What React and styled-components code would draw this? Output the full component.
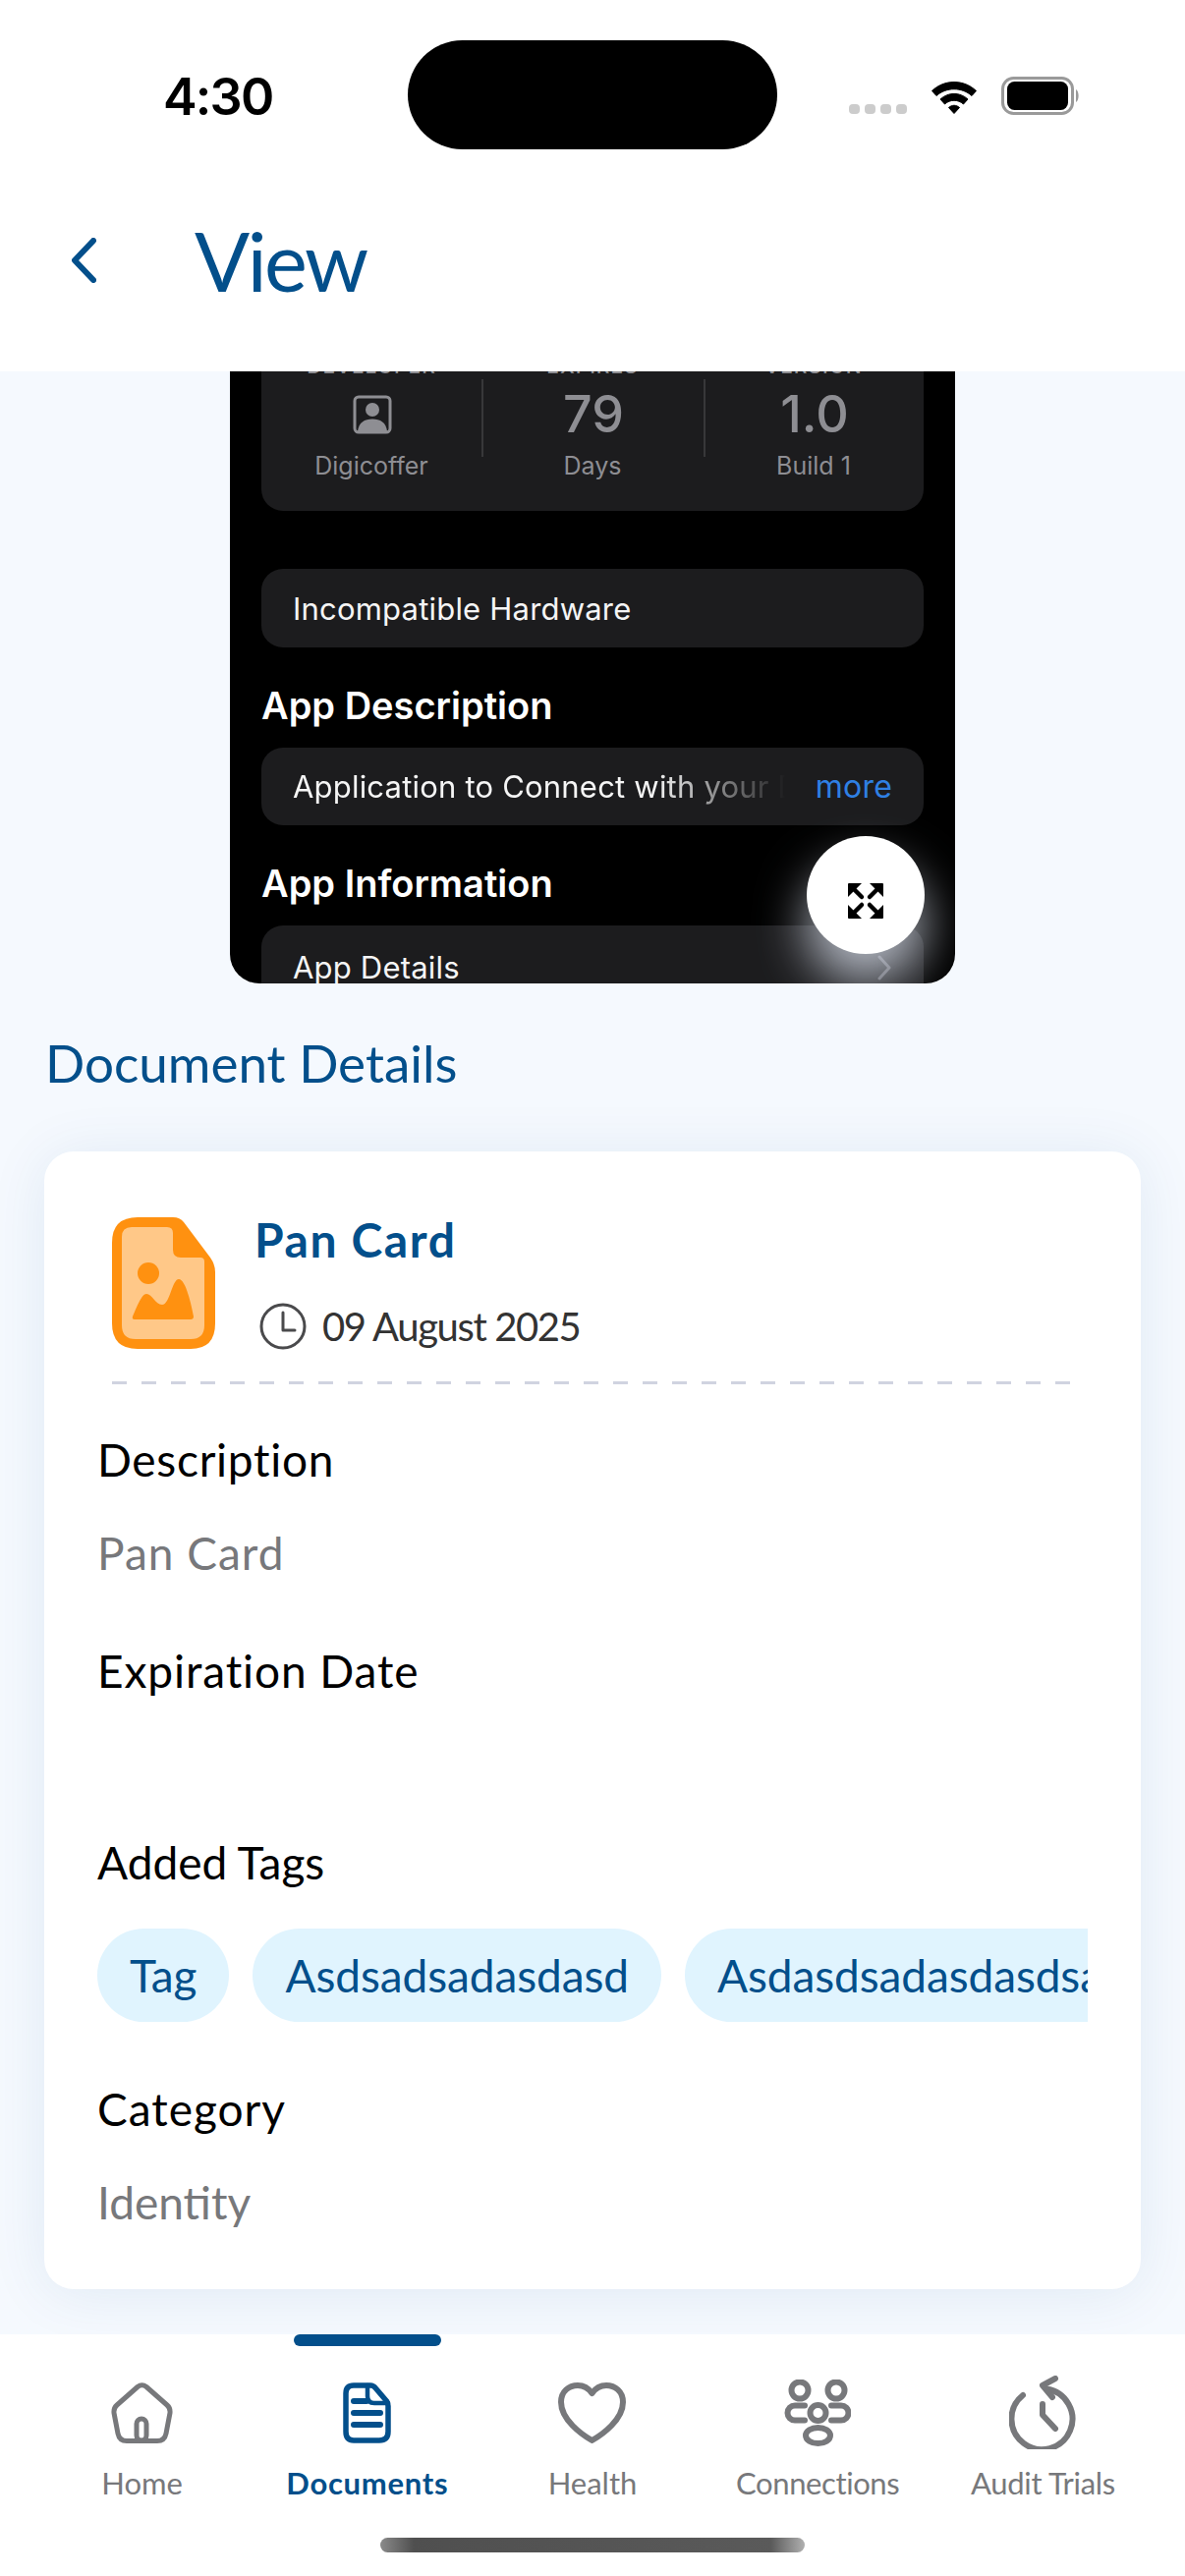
import styled, { createGlobalStyle } from 'styled-components';

const NAVY = '#034f8b';
const GRAY = '#77787b';

const GlobalStyle = createGlobalStyle`
  html, body {
    margin: 0;
    padding: 0;
    background: #ffffff;
  }
  * {
    box-sizing: border-box;
  }
`;

function BackIcon() {
  return (
    <svg width="25" height="46" viewBox="0 0 25 46" fill="none">
      <path d="M22 3 L3 23 L22 43" stroke={NAVY} strokeWidth="6" strokeLinecap="round" strokeLinejoin="round" />
    </svg>
  );
}

function WifiIcon() {
  return (
    <svg width="50" height="37" viewBox="0 0 50 37" fill="none">
      <path d="M2.5 13.5 C15 1.5 35 1.5 47.5 13.5 L43 18.5 C33 9.5 17 9.5 7 18.5 Z" fill="#000" stroke="#000" strokeWidth="1" strokeLinejoin="round" />
      <path d="M11 22 C19 14.5 31 14.5 39 22 L34.5 27 C29 22 21 22 15.5 27 Z" fill="#000" stroke="#000" strokeWidth="1" strokeLinejoin="round" />
      <path d="M19.5 30.5 C23 27.5 27 27.5 30.5 30.5 L25 36.5 Z" fill="#000" stroke="#000" strokeWidth="1" strokeLinejoin="round" />
    </svg>
  );
}

function BatteryIcon() {
  return (
    <svg width="81" height="39" viewBox="0 0 81 39" fill="none">
      <rect x="1.5" y="1.5" width="71" height="36" rx="11" stroke="#9a9a9a" strokeWidth="3" />
      <rect x="6" y="5" width="62" height="29" rx="7.5" fill="#000" />
      <path d="M76 13 C79.5 14.5 79.5 24.5 76 26 Z" fill="#9a9a9a" />
    </svg>
  );
}

function PersonIcon() {
  return (
    <svg width="40" height="40" viewBox="0 0 40 40" fill="none">
      <rect x="2" y="2" width="36" height="36" rx="4" stroke="#8e8e93" strokeWidth="3" />
      <circle cx="20" cy="15" r="7" fill="#8e8e93" />
      <path d="M5 37 C6 28 12 24.500 20 24.500 C28 24.500 34 28 35 37 Z" fill="#8e8e93" />
    </svg>
  );
}

function ExpandIcon() {
  return (
    <svg width="36" height="36" viewBox="0 0 36 36" fill="#000">
      <path d="M0 1 Q0 0 1 0 H14 L0 14 Z" />
      <path d="M36 1 Q36 0 35 0 H22 L36 14 Z" />
      <path d="M0 35 Q0 36 1 36 H14 L0 22 Z" />
      <path d="M36 35 Q36 36 35 36 H22 L36 22 Z" />
      <g stroke="#000" strokeWidth="4.5" strokeLinecap="round">
        <path d="M5 5 L14 14" />
        <path d="M31 5 L22 14" />
        <path d="M5 31 L14 22" />
        <path d="M31 31 L22 22" />
      </g>
    </svg>
  );
}

function ChevronIcon() {
  return (
    <svg width="14" height="26" viewBox="0 0 14 26" fill="none">
      <path d="M2 2 L12 13 L2 24" stroke="#5a5a60" strokeWidth="3" strokeLinecap="round" strokeLinejoin="round" />
    </svg>
  );
}

function FileImageIcon() {
  return (
    <svg width="105" height="134" viewBox="0 0 105 134">
      <path d="M26 0 H62 Q69 0 73 5 L100 41 Q105 48 105 56 V108 Q105 134 80 134 H26 Q0 134 0 108 V26 Q0 0 26 0 Z" fill="#ff9110" />
      <path d="M20 10 H56 Q62 10 62 16 V33 Q62 41 70 41 H90 Q94 41 94 45 V110 Q94 124 80 124 H24 Q10 124 10 110 V20 Q10 10 20 10 Z" fill="#ffc888" />
      <ellipse cx="37" cy="57" rx="11" ry="11" fill="#ff9110" />
      <path d="M21 101 C25 92 30 78 35 78 C41 78 44 89 51 89 C59 89 61 63 68 63 C75 63 81 90 83 101 Q83 104 80 104 H23 Q20 104 21 101 Z" fill="#ff9110" />
    </svg>
  );
}

function ClockIcon() {
  return (
    <svg width="48" height="48" viewBox="0 0 48 48" fill="none" stroke="#4a4a4c" strokeWidth="3" strokeLinecap="round" strokeLinejoin="round">
      <circle cx="24" cy="24" r="22" />
      <path d="M24 10 V28 H36" />
    </svg>
  );
}

function HomeIcon() {
  return (
    <svg width="63" height="62" viewBox="0 0 63 62" fill="none" stroke={GRAY} strokeWidth="5" strokeLinecap="round" strokeLinejoin="round">
      <path d="M27 4.500 Q31.500 1 36 4.500 L57 23 Q60.500 26 60 31 L56 52 Q54.500 59.500 47 59.500 H16 Q8.500 59.500 7 52 L3 31 Q2.500 26 6 23 Z" />
      <rect x="26" y="37" width="10" height="22" rx="5" />
    </svg>
  );
}

function DocumentsIcon() {
  return (
    <svg width="49" height="62" viewBox="0 0 49 62" fill="none" stroke={NAVY} strokeLinecap="round" strokeLinejoin="round">
      <path d="M11 3 H28 Q31 3 33 5.500 L44.500 19 Q46 21 46 24 V50 Q46 59 37 59 H11 Q3 59 3 50 V11 Q3 3 11 3 Z" strokeWidth="5.500" />
      <path d="M25 3 V14 Q25 21 32 21 H46" strokeWidth="4.500" />
      <path d="M11 19 H24 M11 31 H38 M11 43 H38" strokeWidth="6" />
    </svg>
  );
}

function HeartIcon() {
  return (
    <svg width="69" height="62" viewBox="0 0 69 62" fill="none" stroke={GRAY} strokeWidth="6" strokeLinejoin="round">
      <path d="M34.500 59 C24 53 3 38 3 20 C3 9 11 3 20 3 C26 3 31 6 34.500 11 C38 6 43 3 49 3 C58 3 66 9 66 20 C66 38 45 53 34.500 59 Z" />
    </svg>
  );
}

function ConnectionsIcon() {
  return (
    <svg width="68" height="68" viewBox="0 0 68 68" fill="none" stroke={GRAY} strokeWidth="6" strokeLinecap="round">
      <circle cx="16" cy="11" r="8.500" />
      <circle cx="53" cy="11" r="8.500" />
      <circle cx="34.500" cy="34" r="8" />
      <path d="M21 26.500 H11 a7.500 7.500 0 0 0 0 15 H21" />
      <path d="M48 26.500 H58 a7.500 7.500 0 0 1 0 15 H48" />
      <ellipse cx="34.500" cy="57" rx="12.500" ry="8" />
    </svg>
  );
}

function AuditIcon() {
  return (
    <svg width="68" height="75" viewBox="0 0 68 75" fill="none" stroke={GRAY} strokeWidth="6" strokeLinecap="round" strokeLinejoin="round">
      <path d="M14 20 A31 31 0 1 0 38 13.500" />
      <path d="M47 3 L34 10 L44 22" />
      <path d="M34 29 V40 L47 54" />
    </svg>
  );
}

const tabs = [
  { label: 'Home', icon: <HomeIcon /> },
  { label: 'Documents', icon: <DocumentsIcon />, active: true, spacing: 0.7 },
  { label: 'Health', icon: <HeartIcon /> },
  { label: 'Connections', icon: <ConnectionsIcon />, spacing: -0.4 },
  { label: 'Audit Trials', icon: <AuditIcon />, spacing: -0.3 },
];

const stats = [
  { label: 'DEVELOPER', value: <PersonIcon />, caption: 'Digicoffer' },
  { label: 'EXPIRES', value: '79', caption: 'Days' },
  { label: 'VERSION', value: '1.0', caption: 'Build 1' },
];

export default function App() {
  return (
    <Page>
      <GlobalStyle />
      <StatusBar>
        <Clock>4:30</Clock>
        <Island />
        <StatusIcons>
          <SignalDots>
            <i /><i /><i /><i />
          </SignalDots>
          <WifiIcon />
          <BatteryIcon />
        </StatusIcons>
      </StatusBar>
      <Header>
        <BackButton><BackIcon /></BackButton>
        <HeaderTitle>View</HeaderTitle>
      </Header>

      <Content>
        <Preview>
          <StatsCard>
            {stats.map((stat, index) => (
              <Stat key={stat.label}>
                <StatLabel>{stat.label}</StatLabel>
                <StatBody $divider={index > 0}>{stat.value}</StatBody>
                <StatCaption>{stat.caption}</StatCaption>
              </Stat>
            ))}
          </StatsCard>
          <NoticeCard>Incompatible Hardware</NoticeCard>
          <PreviewHeading>App Description</PreviewHeading>
          <DescriptionCard>
            <FadedText>Application to Connect with your D</FadedText>
            <MoreLink>more</MoreLink>
          </DescriptionCard>
          <PreviewHeading>App Information</PreviewHeading>
          <DetailsCard>
            <span>App Details</span>
            <ChevronIcon />
          </DetailsCard>
          <ExpandButton><ExpandIcon /></ExpandButton>
        </Preview>

        <SectionTitle>Document Details</SectionTitle>

        <DetailCard>
          <DocRow>
            <FileImageIcon />
            <DocInfo>
              <DocName>Pan Card</DocName>
              <DocDate>
                <ClockIcon />
                <span>09 August 2025</span>
              </DocDate>
            </DocInfo>
          </DocRow>
          <DashedLine />
          <Fields>
            <FieldLabel $spacing={0.7}>Description</FieldLabel>
            <FieldValue $spacing={1}>Pan Card</FieldValue>
            <FieldLabel $spacing={0.9}>Expiration Date</FieldLabel>
            <FieldValue />
            <FieldLabel>Added Tags</FieldLabel>
            <TagRow>
              <Tag>Tag</Tag>
              <Tag>Asdsadsadasdasd</Tag>
              <Tag>Asdasdsadasdasdsadasd</Tag>
            </TagRow>
            <FieldLabel $spacing={1}>Category</FieldLabel>
            <FieldValue>Identity</FieldValue>
          </Fields>
        </DetailCard>
      </Content>

      <TabBar>
        <Tabs>
          {tabs.map((tab) => (
            <Tab key={tab.label}>
              {tab.active && <ActiveBar />}
              <TabIcon>{tab.icon}</TabIcon>
              <TabLabel $active={tab.active} $spacing={tab.spacing}>{tab.label}</TabLabel>
            </Tab>
          ))}
        </Tabs>
        <HomeIndicator />
      </TabBar>
    </Page>
  );
}

const Page = styled.div`
  width: 1206px;
  height: 2622px;
  display: flex;
  flex-direction: column;
  overflow: hidden;
  background: #ffffff;
  font-family: 'Lato', sans-serif;
`;

const StatusBar = styled.div`
  height: 111px;
  margin-top: 41px;
  padding: 0 106px 0 166px;
  display: flex;
  align-items: center;
`;

const Clock = styled.div`
  width: 249px;
  font-family: 'Inter', sans-serif;
  font-size: 52px;
  font-weight: 600;
  letter-spacing: -1.8px;
  color: #000;
  position: relative;
  top: 2px;
`;

const Island = styled.div`
  width: 376px;
  height: 111px;
  border-radius: 56px;
  background: #000;
`;

const StatusIcons = styled.div`
  margin-left: auto;
  display: flex;
  align-items: center;
  gap: 23px;
  padding-top: 2px;
`;

const SignalDots = styled.div`
  display: flex;
  gap: 5px;
  align-self: flex-end;
  margin-bottom: 1px;
  i {
    display: block;
    width: 11px;
    height: 10px;
    border-radius: 4px;
    background: #cccccc;
  }
`;

const Header = styled.div`
  height: 226px;
  padding-left: 73px;
  display: flex;
  align-items: center;
  background: #fff;
  position: relative;
  z-index: 1;
`;

const BackButton = styled.div`
  width: 25px;
  height: 46px;
  margin-right: 100px;
`;

const HeaderTitle = styled.div`
  font-size: 83px;
  line-height: 90px;
  letter-spacing: -2.5px;
  color: ${NAVY};
`;

const Content = styled.div`
  flex: 1;
  min-height: 0;
  display: flex;
  flex-direction: column;
  background: #f5f9fe;
  overflow: hidden;
`;

const Preview = styled.div`
  position: relative;
  flex: none;
  width: 738px;
  height: 623px;
  margin: 0 auto;
  padding: 0 32px;
  background: #000;
  border-radius: 0 0 30px 30px;
  overflow: hidden;
  font-family: 'Inter', sans-serif;
`;

const StatsCard = styled.div`
  margin-top: -40px;
  padding: 23px 0 37px;
  display: grid;
  grid-template-columns: 224px 226px 224px;
  background: #1c1c1e;
  border-radius: 22px;
`;

const Stat = styled.div`
  display: flex;
  flex-direction: column;
  align-items: stretch;
  text-align: center;
`;

const StatLabel = styled.div`
  font-size: 21px;
  line-height: 24px;
  font-weight: 500;
  letter-spacing: 1px;
  color: #8e8e93;
`;

const StatBody = styled.div`
  height: 79px;
  margin-top: 1px;
  padding-bottom: 8px;
  display: flex;
  align-items: center;
  justify-content: center;
  font-size: 52px;
  font-weight: 500;
  color: #8e8e93;
  border-left: ${(p) => (p.$divider ? '2px solid #38383a' : '2px solid transparent')};
`;

const StatCaption = styled.div`
  font-size: 25px;
  line-height: 18px;
  color: #8e8e93;
`;

const NoticeCard = styled.div`
  height: 80px;
  margin-top: 59px;
  padding: 0 32px;
  display: flex;
  align-items: center;
  background: #1c1c1e;
  border-radius: 22px;
  font-size: 31px;
  letter-spacing: 0.2px;
  color: #f5f5f5;
`;

const PreviewHeading = styled.div`
  margin-top: 37px;
  font-size: 38px;
  line-height: 44px;
  font-weight: 600;
  letter-spacing: 0;
  color: #fff;
  & + div {
    margin-top: 21px;
  }
`;

const DescriptionCard = styled(NoticeCard)`
  height: 79px;
  padding-right: 32px;
  justify-content: space-between;
`;

const FadedText = styled.div`
  width: 512px;
  white-space: nowrap;
  overflow: hidden;
  -webkit-mask-image: linear-gradient(to right, #000 72%, transparent 98%);
  mask-image: linear-gradient(to right, #000 72%, transparent 98%);
`;

const MoreLink = styled.div`
  font-size: 32px;
  color: #2f80e4;
`;

const DetailsCard = styled(NoticeCard)`
  padding: 5px 33px 0 32px;
  justify-content: space-between;
`;

const ExpandButton = styled.div`
  position: absolute;
  right: 31px;
  bottom: 30px;
  width: 120px;
  height: 120px;
  padding-top: 12px;
  border-radius: 50%;
  display: flex;
  align-items: center;
  justify-content: center;
  background: #fff;
  box-shadow: 0 30px 50px rgba(225, 232, 245, 0.75);
`;

const SectionTitle = styled.div`
  margin: 49px 0 0 46px;
  font-size: 53px;
  line-height: 64px;
  color: ${NAVY};
`;

const DetailCard = styled.div`
  flex: none;
  height: 1158px;
  margin: 58px 45px 0;
  padding-top: 67px;
  background: #fff;
  border-radius: 30px;
  box-shadow: 0 4px 60px rgba(3, 79, 139, 0.09);
`;

const DocRow = styled.div`
  padding-left: 69px;
  display: flex;
  gap: 40px;
`;

const DocInfo = styled.div`
  display: flex;
  flex-direction: column;
`;

const DocName = styled.div`
  font-size: 48px;
  line-height: 46px;
  font-weight: 700;
  letter-spacing: 1.6px;
  color: ${NAVY};
`;

const DocDate = styled.div`
  margin-top: 41px;
  display: flex;
  align-items: center;
  gap: 16px;
  padding-left: 5px;
  font-size: 40px;
  line-height: 48px;
  letter-spacing: -1.4px;
  color: #333;
`;

const DashedLine = styled.div`
  height: 3px;
  margin: 32px 71px 0 69px;
  background: repeating-linear-gradient(to right, #d0d3e0 0 15px, transparent 15px 30px);
`;

const Fields = styled.div`
  padding: 49px 0 0 54px;
`;

const FieldLabel = styled.div`
  font-size: 46px;
  line-height: 56px;
  letter-spacing: ${(p) => p.$spacing || 0}px;
  color: #000;
`;

const FieldValue = styled.div`
  min-height: 36px;
  margin: 39px 0 64px;
  font-size: 46px;
  line-height: 56px;
  letter-spacing: ${(p) => p.$spacing || 0}px;
  color: ${GRAY};
`;

const TagRow = styled.div`
  width: 1008px;
  margin: 39px 0 61px;
  display: flex;
  gap: 24px;
  overflow: hidden;
`;

const Tag = styled.div`
  flex: none;
  height: 95px;
  padding: 0 33px;
  display: flex;
  align-items: center;
  border-radius: 48px;
  background: #e0f4fe;
  font-size: 46px;
  letter-spacing: -0.1px;
  white-space: nowrap;
  color: ${NAVY};
`;

const TabBar = styled.div`
  flex: none;
  height: 246px;
  padding-top: 42px;
  background: #fff;
  position: relative;
`;

const Tabs = styled.div`
  padding: 0 30px;
  display: grid;
  grid-template-columns: repeat(5, 1fr);
`;

const Tab = styled.div`
  position: relative;
  display: flex;
  flex-direction: column;
  align-items: center;
`;

const ActiveBar = styled.div`
  position: absolute;
  top: -42px;
  width: 150px;
  height: 12px;
  border-radius: 6px;
  background: ${NAVY};
`;

const TabIcon = styled.div`
  height: 75px;
  display: flex;
  align-items: center;
  justify-content: center;
`;

const TabLabel = styled.div`
  margin-top: 14px;
  font-size: 31px;
  line-height: 40px;
  letter-spacing: ${(p) => p.$spacing || 0}px;
  font-weight: ${(p) => (p.$active ? 700 : 400)};
  color: ${(p) => (p.$active ? NAVY : GRAY)};
`;

const HomeIndicator = styled.div`
  width: 432px;
  height: 15px;
  margin: 36px auto 0;
  border-radius: 8px;
  background: linear-gradient(to right, #8a8a8a, #4f4f4f 8%, #5a5a5a 92%, #b0b0b0);
`;
